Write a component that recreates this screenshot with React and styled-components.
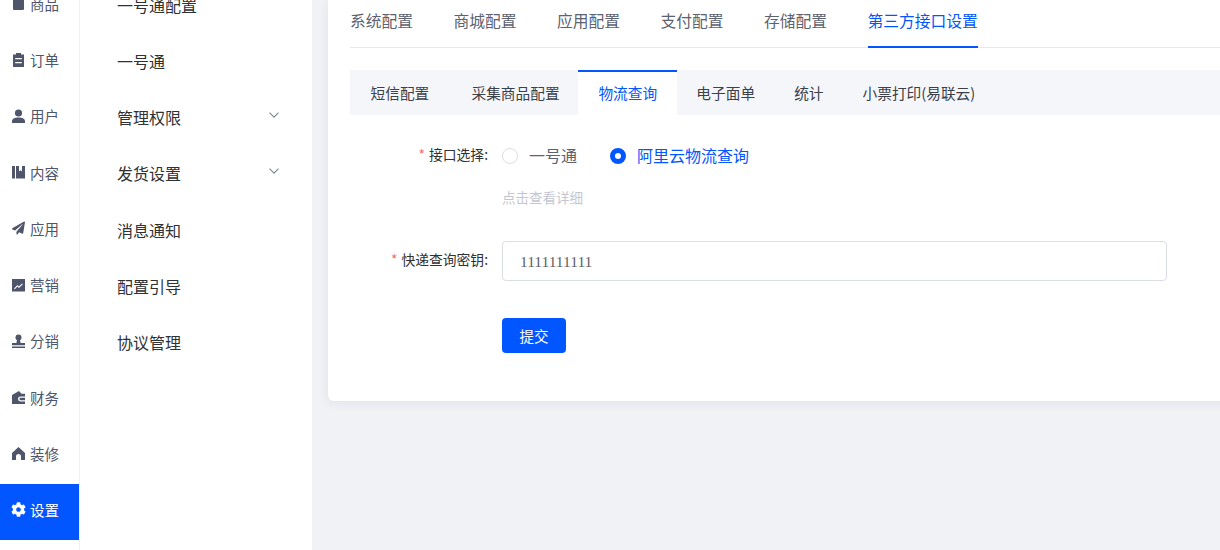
import React from "react";
import styled, { createGlobalStyle } from "styled-components";
import { FaCog, FaPaperPlane } from "react-icons/fa";

const GlobalStyle = createGlobalStyle`
  html, body {
    margin: 0;
    padding: 0;
    height: 100%;
    overflow: hidden;
    background: #f0f2f6;
    font-family: "Noto Sans CJK SC", "Liberation Sans", sans-serif;
  }
`;

const Page = styled.div`
  display: flex;
  width: 1220px;
  height: 550px;
  overflow: hidden;
`;

const Rail = styled.nav`
  flex: none;
  width: 79px;
  height: 550px;
  border-right: 1px solid #eef0f5;
  background: #fff;
  overflow: hidden;
`;

const RailList = styled.div`
  margin-top: -22.25px;
`;

const RailItem = styled.div`
  display: flex;
  align-items: center;
  gap: 5px;
  box-sizing: border-box;
  height: 56.25px;
  padding: 0 0 5px 12px;
  font-size: 14.5px;
  color: ${(p) => (p.$active ? "#fff" : "#4f566b")};
  background: ${(p) => (p.$active ? "#0256ff" : "transparent")};
  svg {
    flex: none;
    width: 13px;
    height: 14px;
  }
  svg.gear {
    width: 15px;
    height: 15px;
    margin: 0 -1px;
  }
`;

const SubMenu = styled.aside`
  flex: none;
  width: 232px;
  height: 550px;
  background: #fff;
  overflow: hidden;
`;

const SubList = styled.div`
  margin-top: -23px;
`;

const SubItem = styled.div`
  display: flex;
  align-items: center;
  justify-content: space-between;
  box-sizing: border-box;
  height: 56.25px;
  padding: 0 33px 1px 37px;
  font-size: 16px;
  color: #303133;
  svg {
    margin-bottom: 5px;
  }
`;

const Main = styled.main`
  flex: 1;
  min-width: 0;
  padding-left: 16px;
  overflow: hidden;
`;

const Card = styled.section`
  width: 920px;
  height: 401px;
  box-sizing: border-box;
  padding: 0 0 0 22px;
  background: #fff;
  border-radius: 0 0 6px 6px;
  box-shadow: 0 2px 12px rgba(30, 40, 70, 0.08);
`;

const TopTabs = styled.div`
  display: flex;
  gap: 40.5px;
  height: 48px;
  box-sizing: border-box;
  border-bottom: 1px solid #e8e9f0;
`;

const TopTab = styled.div`
  height: 46px;
  line-height: 42px;
  font-size: 15.75px;
  white-space: nowrap;
  color: ${(p) => (p.$active ? "#0256ff" : "#5c6270")};
  border-bottom: 2px solid ${(p) => (p.$active ? "#0256ff" : "transparent")};
`;

const SubTabs = styled.div`
  display: flex;
  height: 45px;
  margin-top: 22px;
  background: #f5f6fa;
`;

const SubTab = styled.div`
  box-sizing: border-box;
  height: 45px;
  padding: ${(p) => (p.$active ? "0 19.7px 0 20.5px" : "0 19.5px")};
  margin-left: ${(p) => (p.$active ? "-1.2px" : "0")};
  line-height: 42px;
  font-size: 14.7px;
  white-space: nowrap;
  color: ${(p) => (p.$active ? "#0256ff" : "#3c4048")};
  background: ${(p) => (p.$active ? "#fff" : "transparent")};
  border-top: 2px solid ${(p) => (p.$active ? "#0256ff" : "transparent")};
  &:first-child {
    padding: 0 22.7px 0 20.5px;
  }
`;

const Row = styled.div`
  display: flex;
  align-items: center;
  height: ${(p) => p.$height}px;
  margin-top: ${(p) => p.$top}px;
`;

const Label = styled.label`
  flex: none;
  width: 138px;
  margin: 0 14px 5px 0;
  text-align: right;
  font-size: 13.8px;
  color: #303133;
  white-space: nowrap;
  &::before {
    content: "*";
    margin-right: 4px;
    color: #f56c6c;
  }
`;

const Radio = styled.span`
  display: flex;
  align-items: center;
  gap: 11px;
  margin-right: 33px;
  font-size: 16px;
  color: ${(p) => (p.$checked ? "#0256ff" : "#5c6270")};
`;

const RadioText = styled.span`
  margin-bottom: 3px;
`;

const RadioDot = styled.i`
  box-sizing: border-box;
  display: block;
  width: 16px;
  height: 16px;
  border-radius: 50%;
  border: ${(p) => (p.$checked ? "5px solid #0256ff" : "1px solid #dcdee6")};
  background: #fff;
`;

const Hint = styled.div`
  margin: 0 0 2px 152px;
  font-size: 13.5px;
  color: #c3c7d0;
`;

const Input = styled.input`
  box-sizing: border-box;
  width: 665px;
  height: 40px;
  padding: 1px 17px 0;
  border: 1px solid #dcdee6;
  border-radius: 4px;
  outline: none;
  font-family: "Liberation Serif", serif;
  font-size: 15.5px;
  color: #606266;
`;

const Submit = styled.button`
  width: 64px;
  height: 35px;
  margin-left: 152px;
  padding: 0;
  border: none;
  border-radius: 4px;
  background: #0256ff;
  color: #fff;
  font-family: inherit;
  font-size: 14.5px;
`;

const Chevron = () => (
  <svg width="10" height="6" viewBox="0 0 10 6" fill="none" stroke="#7688a0" strokeWidth="1.1">
    <path d="M.5.7L5 5.200 9.500.7" />
  </svg>
);

const Icon = ({ children }) => (
  <svg viewBox="0 0 13 14" fill="#4f566b">{children}</svg>
);

const railItems = [
  ["商品", <Icon><path d="M1 4h2.500V2.600a3 2.600 0 0 1 6 0V4H12v9a1 1 0 0 1-1 1H2a1 1 0 0 1-1-1zM4.600 4h3.800V2.600a1.900 1.600 0 0 0-3.800 0z" fillRule="evenodd" /></Icon>],
  ["订单", <Icon><path fillRule="evenodd" d="M4 0h5v1.500h3V14H1V1.500h3zM3.200 5v1.200h6.600V5zM3.200 9v1.200h6.600V9z" /></Icon>],
  ["用户", <Icon><circle cx="6.500" cy="4" r="3.600" /><path d="M0 14v-1.500C0 10 2.500 8.600 6.500 8.600S13 10 13 12.500V14z" /></Icon>],
  ["内容", <Icon><path fillRule="evenodd" d="M0 1h3v12.500H0zM4 1h9v12.500H4zM7 1v5.500l1.500-1.300L10 6.500V1z" /></Icon>],
  ["应用", <FaPaperPlane color="#4f566b" />],
  ["营销", <Icon><path fillRule="evenodd" d="M0 1h13v12.500H0zM2 10.500l.8.800 2.700-2.700 1.500 1.500 3.800-3.800-.8-.8-3 3-1.500-1.500z" /></Icon>],
  ["分销", <Icon><circle cx="6.500" cy="3.600" r="3" /><path d="M5 6h3l.6 3H13v2.200H0V9h4.400zM0 12.600h13V14H0z" /></Icon>],
  ["财务", <Icon><path fillRule="evenodd" d="M0 5l7-4 2.500 2.800H13v2.700H8.500a2.500 2.500 0 0 0 0 5H13V14H0zM8.700 7.800h4.300v2.400H8.700a1.200 1.200 0 0 1 0-2.400z" /></Icon>],
  ["装修", <Icon><path d="M6.500 1L13 7v7H9V10.500a2.500 2.500 0 0 0-5 0V14H0V7z" /></Icon>],
  ["设置", <FaCog color="#fff" className="gear" />, true],
];

const subItems = [
  ["一号通配置"],
  ["一号通"],
  ["管理权限", true],
  ["发货设置", true],
  ["消息通知"],
  ["配置引导"],
  ["协议管理"],
];

const topTabs = ["系统配置", "商城配置", "应用配置", "支付配置", "存储配置", "第三方接口设置"];
const subTabs = ["短信配置", "采集商品配置", "物流查询", "电子面单", "统计", "小票打印(易联云)"];

export default function App() {
  return (
    <Page>
      <GlobalStyle />
      <Rail>
        <RailList>
          {railItems.map(([name, icon, active]) => (
            <RailItem key={name} $active={active}>
              {icon}
              {name}
            </RailItem>
          ))}
        </RailList>
      </Rail>
      <SubMenu>
        <SubList>
          {subItems.map(([name, more]) => (
            <SubItem key={name}>
              {name}
              {more && <Chevron />}
            </SubItem>
          ))}
        </SubList>
      </SubMenu>
      <Main>
        <Card>
          <TopTabs>
            {topTabs.map((t) => (
              <TopTab key={t} $active={t === "第三方接口设置"}>{t}</TopTab>
            ))}
          </TopTabs>
          <SubTabs>
            {subTabs.map((t) => (
              <SubTab key={t} $active={t === "物流查询"}>{t}</SubTab>
            ))}
          </SubTabs>
          <Row $height={40} $top={21}>
            <Label>接口选择:</Label>
            <Radio>
              <RadioDot />
              <RadioText>一号通</RadioText>
            </Radio>
            <Radio $checked>
              <RadioDot $checked />
              <RadioText>阿里云物流查询</RadioText>
            </Radio>
          </Row>
          <Row $height={20} $top={12}>
            <Hint>点击查看详细</Hint>
          </Row>
          <Row $height={40} $top={33}>
            <Label>快递查询密钥:</Label>
            <Input defaultValue="1111111111" />
          </Row>
          <Row $height={35} $top={37}>
            <Submit>提交</Submit>
          </Row>
        </Card>
      </Main>
    </Page>
  );
}
